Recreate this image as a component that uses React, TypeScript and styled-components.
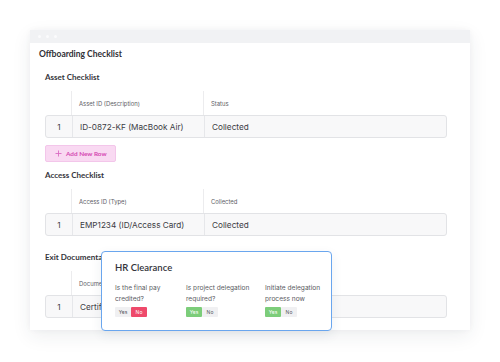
import React from 'react';
import styled, { createGlobalStyle } from 'styled-components';

const Global = createGlobalStyle`
  html, body {
    margin: 0;
    padding: 0;
    background: #ffffff;
    font-family: "Lato", "Liberation Sans", sans-serif;
    color: #333;
  }
`;

const textFont = `"Inter", "Liberation Sans", sans-serif`;

const Page = styled.div`
  width: 500px;
  height: 362px;
  padding: 30px 0 0 30px;
  box-sizing: border-box;
  position: relative;
  overflow: hidden;
`;

const Window = styled.div`
  width: 440px;
  height: 300px;
  background: #fff;
  box-shadow: 0 6px 18px rgba(40, 50, 70, 0.08), 0 0 6px rgba(40, 50, 70, 0.04);
  overflow: hidden;
`;

const TitleBar = styled.div`
  height: 13px;
  background: #f1f2f4;
  display: flex;
  align-items: center;
  gap: 5px;
  padding-left: 8px;
`;

const Dot = styled.span`
  width: 3px;
  height: 3px;
  border-radius: 50%;
  background: #fbfbfc;
`;

const Body = styled.div`
  padding: 4px 22px 0 9px;
`;

const PageTitle = styled.h1`
  margin: 0;
  font-size: 8.5px;
  font-weight: 700;
  line-height: 14px;
  color: #2f2f35;
`;

const Section = styled.div`
  padding-left: 6px;
`;

const SectionTitle = styled.h2<{ top: number }>`
  margin: ${(p) => p.top}px 0 0;
  font-size: 8px;
  font-weight: 700;
  line-height: 12px;
  color: #35353b;
`;

const Table = styled.div`
  margin-top: 8px;
  width: 402px;
`;

const HeadRow = styled.div`
  display: grid;
  grid-template-columns: 26px 132px 1fr;
  height: 24px;
`;

const HeadCell = styled.div`
  display: flex;
  align-items: center;
  padding-left: 7px;
  font-family: ${textFont};
  font-size: 5.9px;
  color: #5e5e66;
  & + & {
    border-left: 1px solid #ececee;
  }
`;

const DataRow = styled.div`
  display: grid;
  grid-template-columns: 26px 132px 1fr;
  height: 23px;
  background: #f8f8f9;
  border: 1px solid #e2e3e6;
  border-radius: 3px;
  box-sizing: border-box;
`;

const Cell = styled.div<{ center?: boolean }>`
  display: flex;
  align-items: center;
  justify-content: ${(p) => (p.center ? 'center' : 'flex-start')};
  padding-left: ${(p) => (p.center ? 0 : 7)}px;
  font-family: ${textFont};
  font-size: 8.2px;
  color: #3c3c44;
  white-space: nowrap;
  & + & {
    border-left: 1px solid #e6e7ea;
  }
`;

const AddButton = styled.button`
  margin-top: 7px;
  width: 71px;
  height: 17px;
  display: flex;
  align-items: center;
  gap: 4px;
  padding: 0 0 0 9px;
  border: 1px solid #f3c6ea;
  border-radius: 2px;
  background: #f9d9f2;
  color: #d447b1;
  font-family: inherit;
  font-size: 6.4px;
  font-weight: 700;
`;

const Popup = styled.div`
  position: absolute;
  left: 101px;
  top: 251px;
  width: 231px;
  height: 80px;
  box-sizing: border-box;
  border: 1.5px solid #6aa6ee;
  border-radius: 4px;
  background: #fff;
  padding: 9px 8px 0 13px;
  box-shadow: 0 4px 12px rgba(40, 60, 90, 0.08);
`;

const PopupTitle = styled.h3`
  margin: 0;
  font-size: 9.5px;
  font-weight: 600;
  line-height: 14px;
  color: #33333a;
`;

const Questions = styled.div`
  margin-top: 8px;
  display: grid;
  grid-template-columns: 71px 79px 1fr;
`;

const Question = styled.div`
  display: flex;
  flex-direction: column;
`;

const QText = styled.div`
  font-family: ${textFont};
  font-size: 6.6px;
  line-height: 10.5px;
  color: #5a5a62;
  width: 68px;
  height: 21px;
`;

const Toggle = styled.div`
  margin-top: 3px;
  display: flex;
`;

const Opt = styled.span<{ tone?: 'red' | 'green' }>`
  width: 16px;
  height: 10px;
  display: flex;
  align-items: center;
  justify-content: center;
  font-family: ${textFont};
  font-size: 5px;
  color: ${(p) => (p.tone ? '#fff' : '#55555c')};
  background: ${(p) =>
    p.tone === 'red' ? '#ee4a6b' : p.tone === 'green' ? '#7ccd7a' : '#f0f0f2'};
  border-radius: 1px;
`;

function PlusIcon() {
  return (
    <svg width="7" height="7" viewBox="0 0 7 7">
      <path d="M3.5 0.5v6M0.5 3.5h6" stroke="#d96cc3" strokeWidth="0.9" />
    </svg>
  );
}

function ChecklistTable({ head, status, value, state }: { head: string; status: string; value: string; state: string }) {
  return (
    <Table>
      <HeadRow>
        <HeadCell />
        <HeadCell>{head}</HeadCell>
        <HeadCell>{status}</HeadCell>
      </HeadRow>
      <DataRow>
        <Cell center>1</Cell>
        <Cell>{value}</Cell>
        <Cell>{state}</Cell>
      </DataRow>
    </Table>
  );
}

const questions: { text: string; yes?: 'green'; no?: 'red' }[] = [
  { text: 'Is the final pay credited?', no: 'red' },
  { text: 'Is project delegation required?', yes: 'green' },
  { text: 'Initiate delegation process now', yes: 'green' },
];

export default function App() {
  return (
    <Page>
      <Global />
      <Window>
        <TitleBar>
          <Dot />
          <Dot />
          <Dot />
        </TitleBar>
        <Body>
          <PageTitle>Offboarding Checklist</PageTitle>
          <Section>
            <SectionTitle top={10}>Asset Checklist</SectionTitle>
            <ChecklistTable head="Asset ID (Description)" status="Status" value="ID-0872-KF (MacBook Air)" state="Collected" />
            <AddButton>
              <PlusIcon />
              Add New Row
            </AddButton>
            <SectionTitle top={7}>Access Checklist</SectionTitle>
            <ChecklistTable head="Access ID (Type)" status="Collected" value="EMP1234 (ID/Access Card)" state="Collected" />
            <SectionTitle top={15}>Exit Documentation</SectionTitle>
            {/* the right half of this table sits under the HR popup */}
            <ChecklistTable head="Document" status="" value="Certificate" state="" />
          </Section>
        </Body>
      </Window>
      <Popup>
        <PopupTitle>HR Clearance</PopupTitle>
        <Questions>
          {questions.map((q) => (
            <Question key={q.text}>
              <QText>{q.text}</QText>
              <Toggle>
                <Opt tone={q.yes}>Yes</Opt>
                <Opt tone={q.no}>No</Opt>
              </Toggle>
            </Question>
          ))}
        </Questions>
      </Popup>
    </Page>
  );
}
